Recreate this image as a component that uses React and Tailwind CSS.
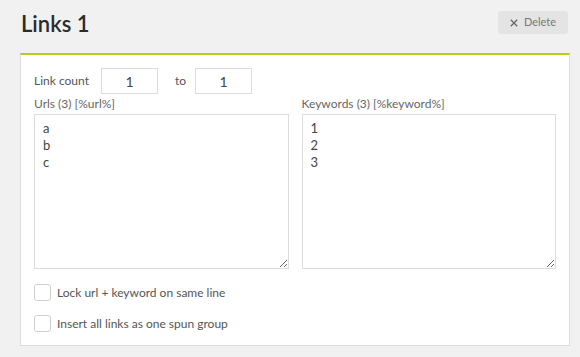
import React from "react";

export default function App() {
  return (
    <div className="w-[580px] h-[357px] bg-[#f1f1f1] overflow-hidden" style={{ fontFamily: "Lato, 'Open Sans', sans-serif" }}>
      <div className="flex items-start justify-between pl-[21px] pr-[12px] h-[53px]">
        <h1 className="text-[22px] leading-[28px] font-semibold text-[#2b2b2b] mt-[10px]">Links 1</h1>
        <button className="mt-[11px] h-[23px] w-[70px] rounded-[3px] bg-[#e4e4e4] text-[#777] text-[11px] flex items-center justify-center gap-[6px]">
          <svg width="8" height="8" viewBox="0 0 8 8" className="mt-[1px]">
            <path d="M0.8 0.8L7.2 7.2M7.2 0.8L0.8 7.2" stroke="#666" strokeWidth="1.3" />
          </svg>
          <span>Delete</span>
        </button>
      </div>
      <div className="ml-[20px] w-[550px] bg-white border border-[#dcdcdc] border-t-2 border-t-[#b5cc18] px-[13px] pt-[13px] pb-[13px]">
        <div className="flex items-center h-[26px] text-[12px] text-[#555]">
          <span className="w-[67px]">Link count</span>
          <input readOnly value="1" className="w-[57px] h-[26px] border border-[#dcdcdc] text-center text-[14px] text-[#444] outline-none" />
          <span className="ml-[17px] w-[20px]">to</span>
          <input readOnly value="1" className="w-[57px] h-[26px] border border-[#dcdcdc] text-center text-[14px] text-[#444] outline-none" />
        </div>
        <div className="grid grid-cols-2 gap-[13px] mt-[2px]">
          <div>
            <div className="text-[12px] leading-[16px] text-[#666] mb-[2px]">Urls (3) [%url%]</div>
            <textarea readOnly value={"a\nb\nc"} className="block w-full h-[155px] border border-[#dcdcdc] px-[8px] py-[5px] text-[13px] leading-[17px] text-[#444] outline-none" />
          </div>
          <div>
            <div className="text-[12px] leading-[16px] text-[#666] mb-[2px]">Keywords (3) [%keyword%]</div>
            <textarea readOnly value={"1\n2\n3"} className="block w-full h-[155px] border border-[#dcdcdc] px-[8px] py-[5px] text-[13px] leading-[17px] text-[#444] outline-none" />
          </div>
        </div>
        <div className="mt-[15px] flex items-center gap-[6px] h-[17px]">
          <span className="w-[17px] h-[17px] rounded-[3px] border border-[#cfcfcf] bg-white" />
          <span className="text-[12px] text-[#555]">Lock url + keyword on same line</span>
        </div>
        <div className="mt-[14px] flex items-center gap-[6px] h-[17px]">
          <span className="w-[17px] h-[17px] rounded-[3px] border border-[#cfcfcf] bg-white" />
          <span className="text-[12px] text-[#555]">Insert all links as one spun group</span>
        </div>
      </div>
    </div>
  );
}
